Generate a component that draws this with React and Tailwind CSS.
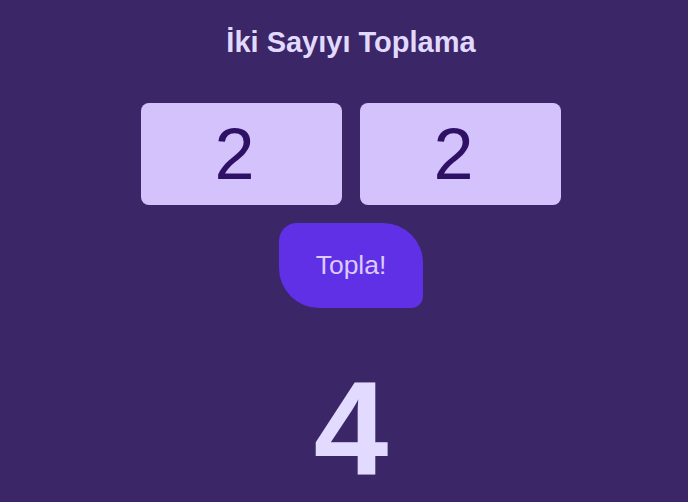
import React, { useState } from 'react';

const App = () => {
  const [a, setA] = useState('2');
  const [b, setB] = useState('2');
  const [sum, setSum] = useState(4);

  const topla = () => setSum(Number(a) + Number(b));

  return (
    <div className="h-[502px] overflow-hidden w-full bg-[#3b2667] pl-[14px] flex flex-col items-center font-['Liberation_Sans',Arial,sans-serif]">
      <h1 className="mt-[26px] text-[29px] leading-[32px] font-bold text-[#e2d9ff]">İki Sayıyı Toplama</h1>

      <div className="mt-[45px] flex gap-[18px]">
        <input
          value={a}
          onChange={(e) => setA(e.target.value)}
          className="w-[201px] h-[102px] pr-[14px] rounded-lg bg-[#d4c2fc] text-[#2e1065] text-[72px] leading-none text-center outline-none"
        />
        <input
          value={b}
          onChange={(e) => setB(e.target.value)}
          className="w-[201px] h-[102px] pr-[14px] rounded-lg bg-[#d4c2fc] text-[#2e1065] text-[72px] leading-none text-center outline-none"
        />
      </div>

      <button
        onClick={topla}
        className="mt-[18px] w-[144px] h-[85px] bg-[#5f30e6] text-[#dccbff] text-[26.5px] rounded-tl-[18px] rounded-tr-[40px] rounded-bl-[40px] rounded-br-[12px]"
      >
        Topla!
      </button>

      <div className="mt-[54px] text-[134px] leading-none font-bold text-[#e2daff]">{sum}</div>
    </div>
  );
};

export default App;
